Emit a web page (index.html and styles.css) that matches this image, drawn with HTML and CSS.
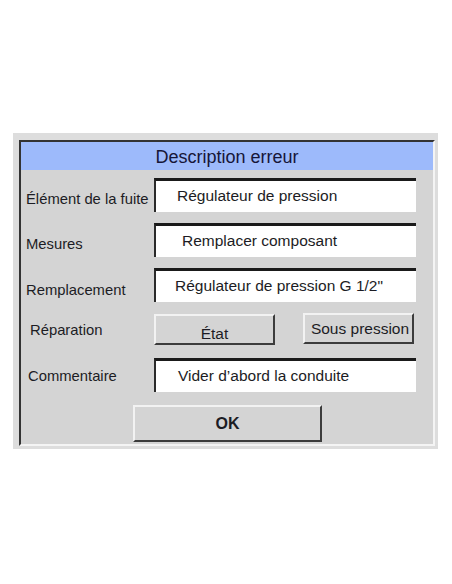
FILE: index.html
```html
<!DOCTYPE html>
<html lang="fr">
<head>
<meta charset="utf-8">
<title>Description erreur</title>
<link rel="stylesheet" href="styles.css">
</head>
<body>
<div class="page">
  <div class="frame">
    <div class="panel">
      <div class="header">Description erreur</div>
      <div class="row row-first">
        <div class="label label-low">Élément de la fuite</div>
        <div class="field">Régulateur de pression</div>
      </div>
      <div class="row">
        <div class="label label-low">Mesures</div>
        <div class="field field-wide">Remplacer composant</div>
      </div>
      <div class="row">
        <div class="label label-lower">Remplacement</div>
        <div class="field field-narrow">Régulateur de pression G 1/2"</div>
      </div>
      <div class="row row-buttons">
        <div class="label label-rep">Réparation</div>
        <div class="btn btn-etat">État</div>
        <div class="btn btn-sous">Sous pression</div>
      </div>
      <div class="row row-comment">
        <div class="label label-com">Commentaire</div>
        <div class="field field-com">Vider d’abord la conduite</div>
      </div>
      <div class="ok-row">
        <div class="btn btn-ok">OK</div>
      </div>
    </div>
  </div>
</div>
</body>
</html>
```

FILE: styles.css
```css
html, body {
  margin: 0;
  padding: 0;
  background: #ffffff;
}

body {
  font-family: "Liberation Sans", Arial, sans-serif;
  color: #1c1c24;
}

.page {
  padding: 133px 0 0 13px;
}

.frame {
  width: 425px;
  height: 316px;
  box-sizing: border-box;
  background: #dddddd;
  padding: 7px 3px 3px 6px;
}

.panel {
  width: 416px;
  height: 306px;
  box-sizing: border-box;
  background: #d4d4d4;
  border-top: 2px solid #333333;
  border-left: 2px solid #333333;
  border-right: 2px solid #f4f4f4;
  border-bottom: 2px solid #f4f4f4;
  display: flex;
  flex-direction: column;
}

.header {
  height: 28px;
  background: #9dbafb;
  text-align: center;
  font-size: 18px;
  line-height: 30px;
  color: #161638;
}

.row {
  display: flex;
  align-items: center;
  height: 34px;
  margin-top: 11px;
}

.row-first {
  margin-top: 8px;
}

.row-buttons {
  height: 32px;
  align-items: flex-start;
}

.row-comment {
  margin-top: 13px;
}

.label {
  width: 128px;
  padding-left: 5px;
  font-size: 14.8px;
  white-space: nowrap;
}

.label-low {
  padding-top: 8px;
}

.label-lower {
  padding-top: 10px;
}

.label-rep {
  padding-left: 9px;
  width: 124px;
  padding-top: 8px;
  line-height: 18px;
}

.label-com {
  padding-left: 7px;
  width: 126px;
  padding-top: 2px;
}

.field {
  width: 262px;
  height: 34px;
  box-sizing: border-box;
  background: #ffffff;
  border-top: 3px solid #1a1a1a;
  border-left: 2px solid #2a2a2a;
  padding-left: 21px;
  font-size: 15.5px;
  line-height: 30px;
  white-space: nowrap;
}

.field-wide {
  padding-left: 26px;
}

.field-narrow {
  padding-left: 19px;
}

.field-com {
  padding-left: 22px;
}

.btn {
  box-sizing: border-box;
  background: #d4d4d4;
  border-top: 2px solid #f2f2f2;
  border-left: 2px solid #f2f2f2;
  border-right: 2px solid #3c3c3c;
  border-bottom: 2px solid #3c3c3c;
  text-align: center;
  font-size: 15.5px;
  white-space: nowrap;
}

.btn-etat {
  width: 121px;
  height: 31px;
  margin-top: 1px;
  line-height: 29px;
  padding-top: 3px;
}

.btn-sous {
  width: 111px;
  height: 31px;
  margin-left: 28px;
  line-height: 27px;
  padding-left: 3px;
}

.ok-row {
  display: flex;
  margin-top: 13px;
  padding-left: 112px;
}

.btn-ok {
  width: 189px;
  height: 37px;
  font-weight: bold;
  font-size: 16px;
  line-height: 33px;
}
```
